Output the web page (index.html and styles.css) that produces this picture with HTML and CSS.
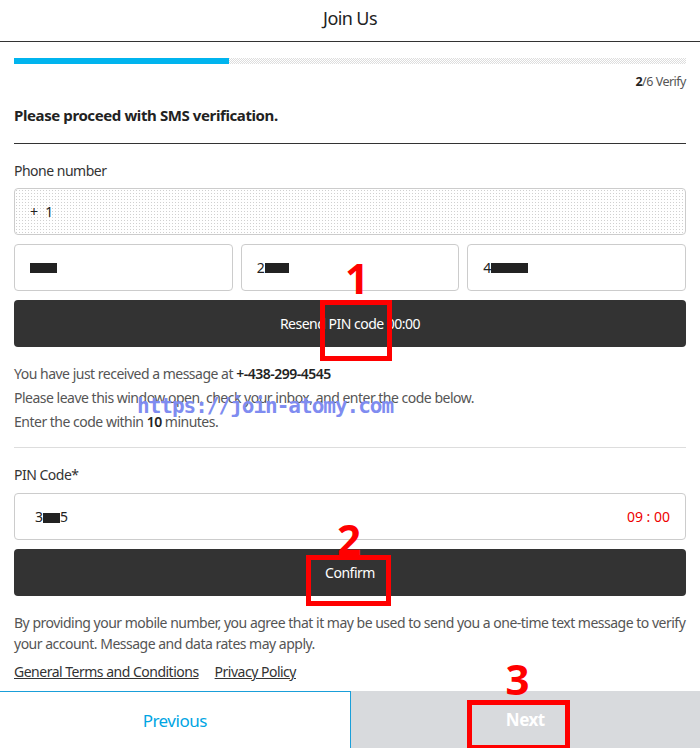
FILE: index.html
```html
<!DOCTYPE html>
<html lang="en">
<head>
    <meta charset="UTF-8">
    <meta name="viewport" content="width=device-width, initial-scale=1.0">
    <title>Join Us</title>
    <link rel="stylesheet" href="styles.css">
</head>
<body>
    <header class="top">
        <h1>Join Us</h1>
    </header>

    <main class="page">
        <!-- Progress -->
        <div class="progress"><div class="progress-fill"></div></div>
        <p class="step"><b>2</b>/6 Verify</p>

        <h2 class="title">Please proceed with SMS verification.</h2>

        <!-- Phone number -->
        <label class="label">Phone number</label>
        <div class="field country">+&nbsp; 1</div>
        <div class="phone-row">
            <div class="field"><span class="redact r1"></span></div>
            <div class="field">2<span class="redact r2"></span></div>
            <div class="field">4<span class="redact r3"></span></div>
        </div>

        <div class="btn-wrap">
            <button class="btn">Resend PIN code 00:00</button>
            <span class="mark mark1"><span class="num">1</span></span>
        </div>

        <div class="notice">
            <p>You have just received a message at <b>+-438-299-4545</b></p>
            <p>Please leave this window open, check your inbox, and enter the code below.</p>
            <p>Enter the code within <b>10</b> minutes.</p>
            <span class="watermark">https://join-atomy.com</span>
        </div>

        <hr class="divider">

        <!-- PIN code -->
        <label class="label pin-label">PIN Code*</label>
        <div class="field pin">
            <span>3<span class="redact r4"></span>5</span>
            <span class="timer">09 : 00</span>
        </div>

        <div class="btn-wrap">
            <button class="btn">Confirm</button>
            <span class="mark mark2"><span class="num">2</span></span>
        </div>

        <p class="terms">By providing your mobile number, you agree that it may be used to send you a one-time text message to verify your account. Message and data rates may apply.</p>

        <div class="links">
            <a href="#">General Terms and Conditions</a>
            <a href="#">Privacy Policy</a>
        </div>
    </main>

    <footer class="bottom">
        <a href="#" class="prev">Previous</a>
        <a href="#" class="next">Next
            <span class="mark mark3"><span class="num">3</span></span>
        </a>
    </footer>
</body>
</html>
```

FILE: styles.css
```css
/* Reset */
body, h1, h2, p, button, hr {
    margin: 0;
    padding: 0;
}

* {
    box-sizing: border-box;
}

body {
    width: 700px;
    height: 748px;
    overflow: hidden;
    background: #fff;
    color: #333;
    font-family: "Noto Sans", "Open Sans", sans-serif;
    font-size: 14px;
}

/* Header */
.top {
    height: 42px;
    border-bottom: 1px solid #333;
    display: flex;
    align-items: center;
    justify-content: center;
    padding-bottom: 5px;
}

.top h1 {
    font-size: 18px;
    font-weight: 400;
    color: #222;
    letter-spacing: -0.6px;
}

/* Main content */
.page {
    padding: 16px 14px 0;
    height: 649px;
}

.progress {
    height: 6px;
    background: repeating-conic-gradient(#ddd 0 25%, #fff 0 50%) 0 0 / 2px 2px;
}

.progress-fill {
    width: 32%;
    height: 100%;
    background: #00b4ee;
}

.step {
    text-align: right;
    font-size: 12.5px;
    color: #555;
    margin-top: 9px;
    letter-spacing: -0.5px;
}

.step b {
    color: #222;
}

.title {
    font-size: 15px;
    font-weight: 700;
    color: #222;
    padding: 15px 0 18px;
    border-bottom: 1px solid #333;
    letter-spacing: -0.4px;
}

.label {
    display: block;
    margin: 17px 0 8px;
    color: #333;
    letter-spacing: -0.5px;
}

.field {
    height: 47px;
    border: 1px solid #ccc;
    border-radius: 4px;
    display: flex;
    align-items: center;
    padding: 0 15px;
    color: #222;
    position: relative;
}

.country {
    background: radial-gradient(#d0d0d0 0.7px, transparent 1px) 0 0 / 3px 3px;
}

.phone-row {
    display: grid;
    grid-template-columns: 1fr 1fr 1fr;
    gap: 8px;
    margin-top: 9px;
}

.redact {
    display: inline-block;
    height: 10px;
    background: #222;
}

.r1 { width: 27px; }
.r2 { width: 24px; }
.r3 { width: 37px; }
.r4 { width: 17px; vertical-align: -1px; }

/* Buttons */
.btn-wrap {
    position: relative;
    margin-top: 9px;
}

.btn {
    width: 100%;
    height: 47px;
    border: none;
    border-radius: 4px;
    background: #333;
    color: #fff;
    font-family: inherit;
    font-size: 14px;
    letter-spacing: -0.5px;
}

/* Annotation marks */
.mark {
    position: absolute;
    border: 5px solid #f00;
}

.num {
    position: absolute;
    color: #f00;
    font-family: "Noto Sans", sans-serif;
    font-weight: 700;
    font-size: 42px;
    line-height: 1;
}

.mark1 {
    left: 306px;
    top: 0;
    width: 72px;
    height: 61px;
}

.mark1 .num { top: -48px; left: 20px; }

.mark2 {
    left: 292px;
    top: 6px;
    width: 85px;
    height: 51px;
}

.mark2 .num { top: -42px; left: 26px; }

.mark3 {
    left: 116px;
    top: 9px;
    width: 103px;
    height: 50px;
}

.mark3 .num { top: -47px; left: 34px; }

/* Notice text */
.notice {
    position: relative;
    margin-top: 15px;
    color: #555;
    line-height: 24px;
    letter-spacing: -0.5px;
}

.notice b {
    font-weight: 600;
    color: #222;
}

.watermark {
    position: absolute;
    left: 123px;
    top: 32px;
    font-family: "DejaVu Sans Mono", monospace;
    font-weight: 700;
    font-size: 21px;
    line-height: 24px;
    color: #7f8cf0;
    letter-spacing: -1px;
}

.divider {
    border: none;
    border-top: 1px solid #ddd;
    margin-top: 13px;
}

.pin-label {
    margin-bottom: 9px;
}

.pin {
    justify-content: space-between;
    padding-left: 20px;
}

.timer {
    color: #e00;
    font-size: 14px;
}

.terms {
    margin-top: 16px;
    color: #555;
    line-height: 21px;
    letter-spacing: -0.5px;
}

.links {
    display: flex;
    gap: 16px;
    margin-top: 8px;
}

.links a {
    color: #333;
    letter-spacing: -0.5px;
}

/* Footer */
.bottom {
    display: flex;
    height: 57px;
}

.bottom a {
    flex: 1;
    display: flex;
    align-items: center;
    justify-content: center;
    font-size: 17px;
    text-decoration: none;
    letter-spacing: -0.5px;
}

.prev {
    color: #00a5e3;
    border-top: 1px solid #1a9fd9;
    border-right: 1px solid #1a9fd9;
}

.next {
    position: relative;
    background: #d8dadd;
    color: #fff;
    font-weight: 700;
}
```
